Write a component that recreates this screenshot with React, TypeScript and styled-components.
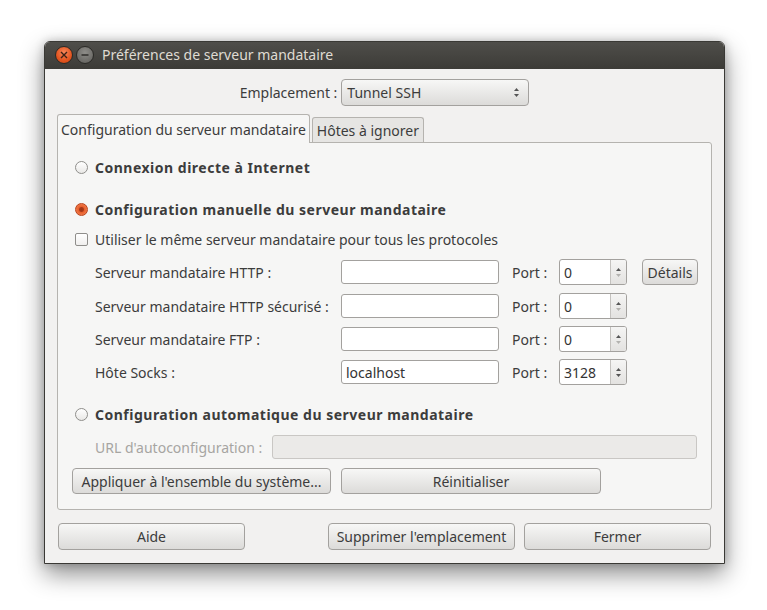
import React from "react";
import styled, { createGlobalStyle } from "styled-components";

const Global = createGlobalStyle`
  html, body {
    margin: 0;
    padding: 0;
    background: #ffffff;
  }
  body {
    font-family: "Noto Sans", "DejaVu Sans", sans-serif;
    font-size: 14px;
    color: #3c3c3c;
  }
`;

const Page = styled.div`
  width: 767px;
  height: 610px;
  padding: 41px 0 0 44px;
  box-sizing: border-box;
`;

const Window = styled.div`
  width: 681px;
  height: 523px;
  box-sizing: border-box;
  display: flex;
  flex-direction: column;
  border: 1px solid #3a3935;
  border-radius: 6px 6px 0 0;
  background: #f2f1f0;
  box-shadow: 0 10px 24px rgba(0, 0, 0, 0.45), 0 0 10px rgba(0, 0, 0, 0.2);
  overflow: hidden;
`;

const TitleBar = styled.div`
  height: 27px;
  flex: none;
  display: flex;
  align-items: center;
  padding-left: 10px;
  background: linear-gradient(#4f4e4a, #3c3b37);
  color: #dfdbd2;
  font-size: 14px;
  line-height: 1;
  padding-bottom: 1px;
  box-sizing: border-box;
`;

const WinButton = styled.div<{ $kind: "close" | "min" }>`
  width: 16px;
  height: 16px;
  border-radius: 50%;
  margin-right: 3px;
  display: flex;
  align-items: center;
  justify-content: center;
  border: 1px solid #2b2a27;
  background: ${(p) =>
    p.$kind === "close"
      ? "radial-gradient(circle at 50% 35%, #f7875a, #e2541f 60%, #c8430f)"
      : "radial-gradient(circle at 50% 35%, #8e8d89, #6c6b67 70%, #5c5b57)"};
`;

const TitleText = styled.span`
  margin-left: 5px;
`;

const Body = styled.div`
  flex: 1;
  display: flex;
  flex-direction: column;
  padding: 10px 12px 13px 12px;
`;

const LocationRow = styled.div`
  display: flex;
  justify-content: center;
  align-items: center;
  gap: 4px;
  height: 27px;
`;

const Combo = styled.div`
  width: 188px;
  height: 27px;
  box-sizing: border-box;
  border: 1px solid #a3a19e;
  border-radius: 4px;
  background: linear-gradient(#f7f7f6, #dcdbd9);
  display: flex;
  align-items: center;
  justify-content: space-between;
  padding: 0 8px 0 5px;
`;

const Tabs = styled.div`
  display: flex;
  align-items: flex-end;
  margin-top: 8px;
  height: 28px;
`;

const Tab = styled.div<{ $active?: boolean }>`
  box-sizing: border-box;
  height: ${(p) => (p.$active ? "29px" : "25px")};
  padding: 0 ${(p) => (p.$active ? 3 : 4)}px;
  display: flex;
  align-items: center;
  border: 1px solid #b5b3af;
  border-bottom: none;
  border-radius: 3px 3px 0 0;
  background: ${(p) => (p.$active ? "#f6f6f5" : "#e6e5e3")};
  margin-right: 2px;
  margin-bottom: ${(p) => (p.$active ? "-1px" : "0")};
  position: relative;
  z-index: ${(p) => (p.$active ? 1 : 0)};
`;

const Panel = styled.div`
  height: 368px;
  box-sizing: border-box;
  border: 1px solid #b5b3af;
  border-radius: 0 3px 3px 3px;
  background: #f6f6f5;
  display: flex;
  flex-direction: column;
  padding: 14px 14px 0 14px;
`;

const Line = styled.div<{ $mt?: number; $indent?: number }>`
  display: flex;
  align-items: center;
  height: 20px;
  margin-top: ${(p) => p.$mt ?? 0}px;
  padding-left: ${(p) => p.$indent ?? 0}px;
`;

const Radio = styled.div<{ $checked?: boolean }>`
  width: 13px;
  height: 13px;
  border-radius: 50%;
  margin-right: 7px;
  box-sizing: border-box;
  border: 1px solid ${(p) => (p.$checked ? "#b9431b" : "#8f8e8b")};
  background: ${(p) =>
    p.$checked
      ? "radial-gradient(circle, #9a3414 0, #a9391a 2px, #e8602c 3px, #f07c4e 6px)"
      : "linear-gradient(#ffffff, #e9e8e6)"};
`;

const Check = styled.div`
  width: 13px;
  height: 13px;
  box-sizing: border-box;
  border: 1px solid #8f8e8b;
  border-radius: 2px;
  background: linear-gradient(#ffffff, #f0efee);
  margin-right: 7px;
`;

const Strong = styled.span`
  font-weight: bold;
  letter-spacing: 0.5px;
`;

const FormRow = styled.div<{ $mt: number }>`
  display: grid;
  grid-template-columns: 246px 158px 60px 68px auto;
  align-items: center;
  height: 26px;
  margin-top: ${(p) => p.$mt}px;
  padding-left: 23px;
`;

const Entry = styled.div<{ $disabled?: boolean; $width?: number }>`
  height: 24px;
  box-sizing: border-box;
  width: ${(p) => (p.$width ? `${p.$width}px` : "100%")};
  border: 1px solid ${(p) => (p.$disabled ? "#c9c7c4" : "#a3a19e")};
  border-radius: 3px;
  background: ${(p) => (p.$disabled ? "#ebeae8" : "#ffffff")};
  display: flex;
  align-items: center;
  padding-left: 4px;
  color: #333;
`;

const PortLabel = styled.span`
  padding-left: 13px;
`;

const Spin = styled.div`
  height: 26px;
  box-sizing: border-box;
  border: 1px solid #a3a19e;
  border-radius: 3px;
  background: #ffffff;
  display: flex;
  overflow: hidden;
`;

const SpinText = styled.div`
  flex: 1;
  display: flex;
  align-items: center;
  padding-left: 4px;
  color: #333;
`;

const SpinButtons = styled.div`
  width: 15px;
  border-left: 1px solid #c4c2bf;
  background: linear-gradient(#f5f5f4, #e3e2e0);
  display: flex;
  align-items: center;
  justify-content: center;
`;

const Button = styled.div<{ $width?: number; $height?: number }>`
  box-sizing: border-box;
  width: ${(p) => (p.$width ? `${p.$width}px` : "auto")};
  height: ${(p) => p.$height ?? 26}px;
  padding: 0 5px;
  border: 1px solid #a3a19e;
  border-radius: 4px;
  background: linear-gradient(#f7f7f6, #dcdbd9);
  display: flex;
  align-items: center;
  justify-content: center;
  white-space: nowrap;
`;

const DetailsButton = styled(Button)`
  margin-left: 15px;
  width: 56px;
`;

const UrlRow = styled.div`
  display: flex;
  align-items: center;
  height: 24px;
  margin-top: 11px;
  padding-left: 23px;
`;

const Muted = styled.span`
  color: #a6a5a2;
  width: 177px;
`;

const ButtonRow = styled.div<{ $mt: number; $gap: number }>`
  display: flex;
  gap: ${(p) => p.$gap}px;
  margin-top: ${(p) => p.$mt}px;
`;

const Footer = styled.div`
  margin-top: 13px;
  padding: 0 1px;
  display: flex;
  gap: 9px;
`;

const Spacer = styled.div`
  flex: 1;
`;

const Arrows = ({ light }: { light?: boolean }) => (
  <svg width="7" height="11" viewBox="0 0 7 11">
    <path d="M3.5 1 L6 4 L1 4 Z" fill="#555" />
    <path d="M3.5 10 L6 7 L1 7 Z" fill={light ? "#b3b2af" : "#555"} />
  </svg>
);

const CloseGlyph = () => (
  <svg width="8" height="8" viewBox="0 0 8 8">
    <path d="M1 1 L7 7 M7 1 L1 7" stroke="#3b2116" strokeWidth="1.4" />
  </svg>
);

const MinGlyph = () => (
  <svg width="8" height="8" viewBox="0 0 8 8">
    <path d="M0.5 4 L7.5 4" stroke="#2f2e2b" strokeWidth="1.4" />
  </svg>
);

const rows = [
  { label: "Serveur mandataire HTTP :", value: "", port: "0", details: true, mt: 10 },
  { label: "Serveur mandataire HTTP sécurisé :", value: "", port: "0", mt: 8 },
  { label: "Serveur mandataire FTP :", value: "", port: "0", mt: 7 },
  { label: "Hôte Socks :", value: "localhost", port: "3128", mt: 7 },
];

export default function App() {
  return (
    <Page>
      <Global />
      <Window>
        <TitleBar>
          <WinButton $kind="close">
            <CloseGlyph />
          </WinButton>
          <WinButton $kind="min">
            <MinGlyph />
          </WinButton>
          <TitleText>Préférences de serveur mandataire</TitleText>
        </TitleBar>
        <Body>
          <LocationRow>
            <span>Emplacement :</span>
            <Combo>
              <span>Tunnel SSH</span>
              <Arrows />
            </Combo>
          </LocationRow>
          <Tabs>
            <Tab $active>Configuration du serveur mandataire</Tab>
            <Tab>Hôtes à ignorer</Tab>
          </Tabs>
          <Panel>
            <Line $mt={0} $indent={3}>
              <Radio />
              <Strong>Connexion directe à Internet</Strong>
            </Line>
            <Line $mt={22} $indent={3}>
              <Radio $checked />
              <Strong>Configuration manuelle du serveur mandataire</Strong>
            </Line>
            <Line $mt={10} $indent={3}>
              <Check />
              <span>Utiliser le même serveur mandataire pour tous les protocoles</span>
            </Line>
            {rows.map((r) => (
              <FormRow key={r.label} $mt={r.mt}>
                <span>{r.label}</span>
                <Entry>{r.value}</Entry>
                <PortLabel>Port :</PortLabel>
                <Spin>
                  <SpinText>{r.port}</SpinText>
                  <SpinButtons>
                    <Arrows light={r.port === "0"} />
                  </SpinButtons>
                </Spin>
                {r.details ? <DetailsButton>Détails</DetailsButton> : <span />}
              </FormRow>
            ))}
            <Line $mt={19} $indent={3}>
              <Radio />
              <Strong>Configuration automatique du serveur mandataire</Strong>
            </Line>
            <UrlRow>
              <Muted>URL d'autoconfiguration :</Muted>
              <Entry $disabled $width={425} />
            </UrlRow>
            <ButtonRow $mt={9} $gap={10}>
              <Button $width={259}>Appliquer à l'ensemble du système...</Button>
              <Button $width={260}>Réinitialiser</Button>
            </ButtonRow>
          </Panel>
          <Footer>
            <Button $width={187} $height={27}>Aide</Button>
            <Spacer />
            <Button $width={187} $height={27}>Supprimer l'emplacement</Button>
            <Button $width={187} $height={27}>Fermer</Button>
          </Footer>
        </Body>
      </Window>
    </Page>
  );
}
